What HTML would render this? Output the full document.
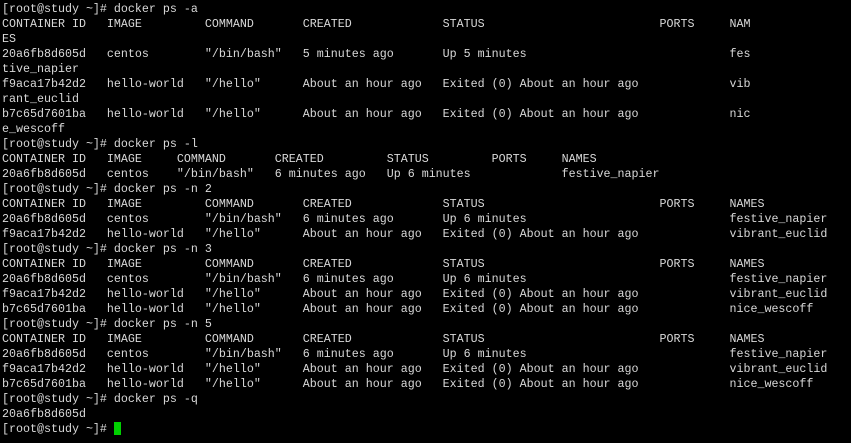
<!DOCTYPE html>
<html><head><meta charset="utf-8"><style>
html,body{margin:0;padding:0;background:#000;width:851px;height:443px;overflow:hidden}
pre{margin:0;padding:2px 0 0 2px;font-family:"Liberation Mono",monospace;font-size:11.667px;line-height:15px;color:#d9d9d9;white-space:pre}
.c{display:inline-block;width:7px;height:13px;background:#00d000;vertical-align:-3px}
</style></head><body><pre>[root@study ~]# docker ps -a
CONTAINER ID   IMAGE         COMMAND       CREATED             STATUS                         PORTS     NAM
ES
20a6fb8d605d   centos        "/bin/bash"   5 minutes ago       Up 5 minutes                             fes
tive_napier
f9aca17b42d2   hello-world   "/hello"      About an hour ago   Exited (0) About an hour ago             vib
rant_euclid
b7c65d7601ba   hello-world   "/hello"      About an hour ago   Exited (0) About an hour ago             nic
e_wescoff
[root@study ~]# docker ps -l
CONTAINER ID   IMAGE     COMMAND       CREATED         STATUS         PORTS     NAMES
20a6fb8d605d   centos    "/bin/bash"   6 minutes ago   Up 6 minutes             festive_napier
[root@study ~]# docker ps -n 2
CONTAINER ID   IMAGE         COMMAND       CREATED             STATUS                         PORTS     NAMES
20a6fb8d605d   centos        "/bin/bash"   6 minutes ago       Up 6 minutes                             festive_napier
f9aca17b42d2   hello-world   "/hello"      About an hour ago   Exited (0) About an hour ago             vibrant_euclid
[root@study ~]# docker ps -n 3
CONTAINER ID   IMAGE         COMMAND       CREATED             STATUS                         PORTS     NAMES
20a6fb8d605d   centos        "/bin/bash"   6 minutes ago       Up 6 minutes                             festive_napier
f9aca17b42d2   hello-world   "/hello"      About an hour ago   Exited (0) About an hour ago             vibrant_euclid
b7c65d7601ba   hello-world   "/hello"      About an hour ago   Exited (0) About an hour ago             nice_wescoff
[root@study ~]# docker ps -n 5
CONTAINER ID   IMAGE         COMMAND       CREATED             STATUS                         PORTS     NAMES
20a6fb8d605d   centos        "/bin/bash"   6 minutes ago       Up 6 minutes                             festive_napier
f9aca17b42d2   hello-world   "/hello"      About an hour ago   Exited (0) About an hour ago             vibrant_euclid
b7c65d7601ba   hello-world   "/hello"      About an hour ago   Exited (0) About an hour ago             nice_wescoff
[root@study ~]# docker ps -q
20a6fb8d605d
[root@study ~]# <span class="c"></span></pre></body></html>
